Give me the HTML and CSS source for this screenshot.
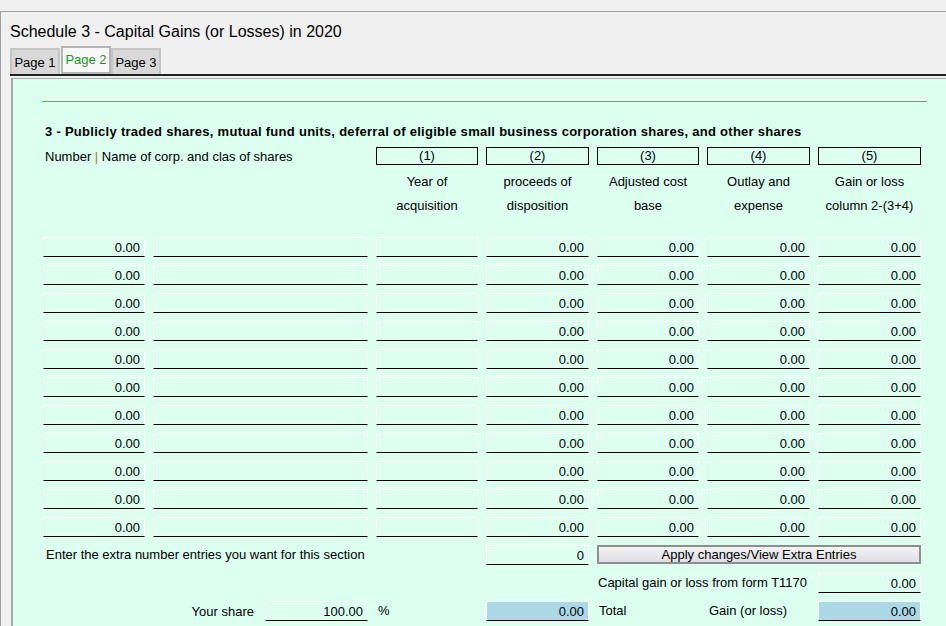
FILE: index.html
```html
<!DOCTYPE html>
<html>
<head>
<meta charset="utf-8">
<link rel="stylesheet" href="styles.css">
</head>
<body>
<div class="window">
  <div class="title">Schedule 3 - Capital Gains (or Losses) in 2020</div>
  <div class="tabs">
    <div class="tab">Page 1</div>
    <div class="tab active">Page 2</div>
    <div class="tab">Page 3</div>
  </div>
  <div class="tabline"></div>
  <div class="panel">
    <div class="rule"></div>
    <div class="heading">3 - Publicly traded shares, mutual fund units, deferral of eligible small business corporation shares, and other shares</div>
    <div class="form">
      <div class="hdr-text span2">Number <span class="sep">|</span> Name of corp. and clas of shares</div>
      <div class="colbox">(1)</div>
      <div class="colbox">(2)</div>
      <div class="colbox">(3)</div>
      <div class="colbox">(4)</div>
      <div class="colbox">(5)</div>

      <div class="lbl c3">Year of<br>acquisition</div>
      <div class="lbl">proceeds of<br>disposition</div>
      <div class="lbl">Adjusted cost<br>base</div>
      <div class="lbl">Outlay and<br>expense</div>
      <div class="lbl">Gain or loss<br>column 2-(3+4)</div>

      <div class="rows">
        <div class="fld">0.00</div><div class="fld"></div><div class="fld"></div><div class="fld">0.00</div><div class="fld">0.00</div><div class="fld">0.00</div><div class="fld">0.00</div>
        <div class="fld">0.00</div><div class="fld"></div><div class="fld"></div><div class="fld">0.00</div><div class="fld">0.00</div><div class="fld">0.00</div><div class="fld">0.00</div>
        <div class="fld">0.00</div><div class="fld"></div><div class="fld"></div><div class="fld">0.00</div><div class="fld">0.00</div><div class="fld">0.00</div><div class="fld">0.00</div>
        <div class="fld">0.00</div><div class="fld"></div><div class="fld"></div><div class="fld">0.00</div><div class="fld">0.00</div><div class="fld">0.00</div><div class="fld">0.00</div>
        <div class="fld">0.00</div><div class="fld"></div><div class="fld"></div><div class="fld">0.00</div><div class="fld">0.00</div><div class="fld">0.00</div><div class="fld">0.00</div>
        <div class="fld">0.00</div><div class="fld"></div><div class="fld"></div><div class="fld">0.00</div><div class="fld">0.00</div><div class="fld">0.00</div><div class="fld">0.00</div>
        <div class="fld">0.00</div><div class="fld"></div><div class="fld"></div><div class="fld">0.00</div><div class="fld">0.00</div><div class="fld">0.00</div><div class="fld">0.00</div>
        <div class="fld">0.00</div><div class="fld"></div><div class="fld"></div><div class="fld">0.00</div><div class="fld">0.00</div><div class="fld">0.00</div><div class="fld">0.00</div>
        <div class="fld">0.00</div><div class="fld"></div><div class="fld"></div><div class="fld">0.00</div><div class="fld">0.00</div><div class="fld">0.00</div><div class="fld">0.00</div>
        <div class="fld">0.00</div><div class="fld"></div><div class="fld"></div><div class="fld">0.00</div><div class="fld">0.00</div><div class="fld">0.00</div><div class="fld">0.00</div>
        <div class="fld">0.00</div><div class="fld"></div><div class="fld"></div><div class="fld">0.00</div><div class="fld">0.00</div><div class="fld">0.00</div><div class="fld">0.00</div>

        <div class="txt span3 pad3">Enter the extra number entries you want for this section</div>
        <div class="fld">0</div>
        <div class="btn span3">Apply changes/View Extra Entries</div>

        <div class="txt c5 span2 pad1">Capital gain or loss from form T1170</div>
        <div class="fld">0.00</div>

        <div class="share span2"><span>Your share</span><div class="fld sharefld">100.00</div></div>
        <div class="txt pad2">%</div>
        <div class="fld blue">0.00</div>
        <div class="txt pad2">Total</div>
        <div class="txt pad2">Gain (or loss)</div>
        <div class="fld blue">0.00</div>
      </div>
    </div>
  </div>
</div>
</body>
</html>
```
FILE: styles.css
```css
html, body {
  margin: 0;
  padding: 0;
  background: #f0f0f0;
  font-family: "Liberation Sans", Arial, sans-serif;
  font-size: 13px;
  color: #000;
  overflow: hidden;
}
.window {
  margin-top: 11px;
  border-top: 1px solid #a0a0a0;
  border-left: 1px solid #a0a0a0;
}
.title {
  padding-left: 9px;
  font-size: 16px;
  line-height: 20px;
  padding-top: 10px;
  height: 20px;
}
.tabs {
  display: flex;
  align-items: flex-end;
  margin-left: 9px;
  margin-top: 4px;
  height: 28px;
}
.tab {
  box-sizing: border-box;
  width: 50px;
  height: 26px;
  background: #d8d8d8;
  border: 2px solid #c6c6c6;
  border-bottom: none;
  font-size: 13px;
  line-height: 25px;
  text-align: center;
}
.tab.active {
  height: 28px;
  width: 50px;
  margin-left: 1px;
  background: #f8f8f8;
  border-color: #b4b4b4;
  border-bottom: 2px solid #b4b4b4;
  color: #1a9a1a;
  line-height: 23px;
}
.tabline {
  margin-left: 9px;
  height: 2px;
  background: #222;
}
.panel {
  box-sizing: border-box;
  margin-top: 2px;
  margin-left: 10px;
  border-top: 1px solid #a8a8a8;
  border-left: 2px solid #a8a8a8;
  background: #dcfff0;
  height: 548px;
  padding-top: 22px;
}
.rule {
  margin-left: 29px;
  margin-right: 19px;
  height: 1px;
  background: #d07a30;
}
.heading {
  margin-top: 22px;
  margin-left: 32px;
  font-weight: bold;
  font-size: 13px;
  letter-spacing: 0.28px;
  line-height: 16px;
}
.form {
  margin-top: 7px;
  margin-left: 30px;
  display: grid;
  grid-template-columns: 102px 215px 102px 103px 102px 103px 103px;
  column-gap: 8px;
}
.hdr-text {
  grid-column: span 2;
  padding-left: 2px;
  line-height: 18px;
  padding-top: 1px;
  height: 18px;
  box-sizing: border-box;
}
.sep { color: #c07020; }
.colbox {
  box-sizing: border-box;
  height: 18px;
  border: 1px solid #000;
  text-align: center;
  line-height: 16px;
}
.lbl {
  text-align: center;
  line-height: 24px;
  margin-top: 5px;
}
.c3 { grid-column: 3; }
.c5 { grid-column: 5; }
.rows {
  grid-column: 1 / -1;
  display: grid;
  grid-template-columns: subgrid;
  grid-auto-rows: 20px;
  row-gap: 8px;
  margin-top: 19px;
}
.fld {
  box-sizing: border-box;
  height: 20px;
  border: 1px solid #fff;
  border-bottom: 1px solid #000;
  text-align: right;
  padding-right: 4px;
  line-height: 19px;
}
.fld.blue {
  background: #add8e6;
}
.txt {
  line-height: 20px;
  white-space: nowrap;
}
.span2 { grid-column: span 2; }
.span3 { grid-column: span 3; }
.pad1 { padding-left: 1px; }
.pad2 { padding-left: 2px; }
.pad3 { padding-left: 3px; }
.txt.c5 { grid-column: 5 / span 2; }
.btn {
  box-sizing: border-box;
  height: 19px;
  border: 2px solid #8e8e8e;
  background: linear-gradient(#f4f4f6, #dedee4);
  text-align: center;
  line-height: 15px;
}
.share {
  display: flex;
  justify-content: flex-end;
  align-items: center;
  gap: 11px;
}
.sharefld {
  width: 103px;
}
```
